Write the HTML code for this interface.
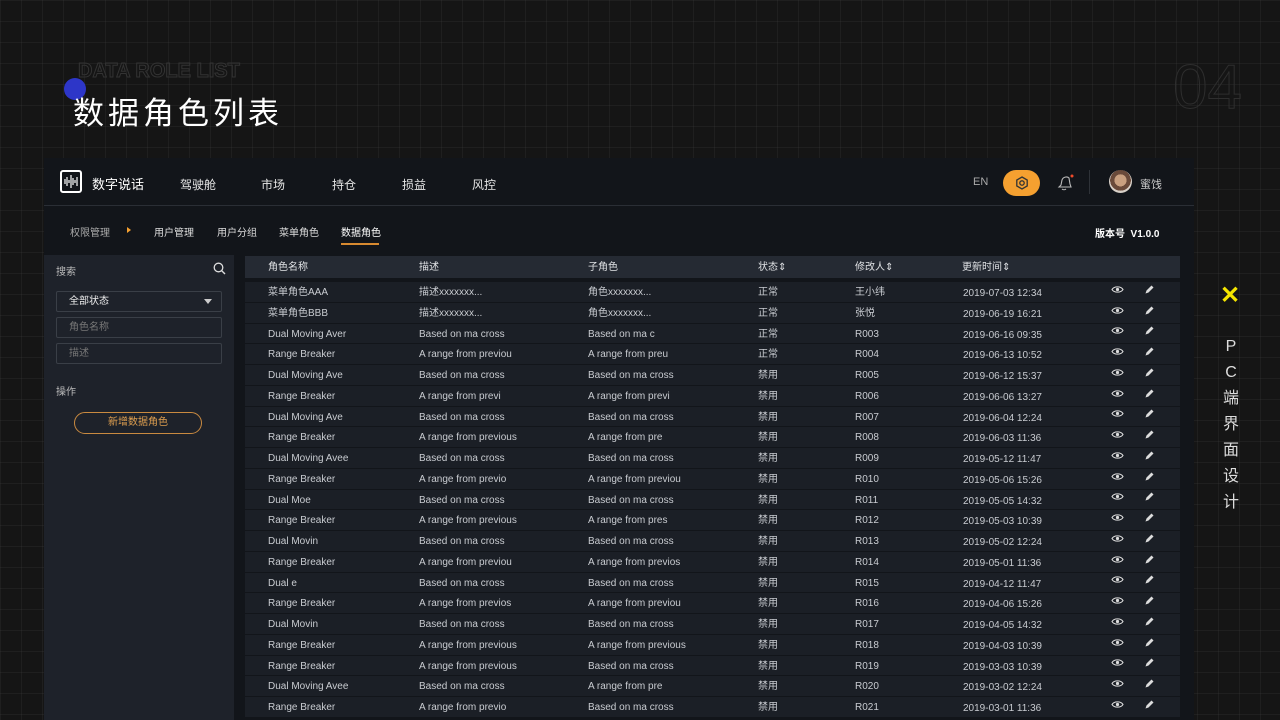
<!DOCTYPE html>
<html><head><meta charset="utf-8"><style>
*{margin:0;padding:0;box-sizing:border-box}
body{width:1280px;height:720px;overflow:hidden;position:relative;font-family:"Liberation Sans","Noto Sans CJK SC",sans-serif;
background:#151515;
background-image:linear-gradient(rgba(70,70,70,.2) 1px,transparent 1px),linear-gradient(90deg,rgba(70,70,70,.2) 1px,transparent 1px);
background-size:21px 21px;}
.abs{position:absolute}
.t{white-space:nowrap}
.row{position:absolute;left:245px;width:935px;height:19.75px;background:#1b1f26;font-size:10px;color:#c9ccd1;line-height:20px}
.row span{position:absolute;top:1px;white-space:nowrap;line-height:20px;height:20px}
.row span svg{vertical-align:middle}
.hd span{position:absolute;top:0;line-height:24px;font-size:10px;color:#e0e2e5;white-space:nowrap}
</style></head><body>
<div class="abs t" style="left:78px;top:60px;font-size:20px;font-weight:bold;color:transparent;-webkit-text-stroke:1px #333">DATA ROLE LIST</div>
<div class="abs" style="left:64px;top:78px;width:22px;height:22px;border-radius:50%;background:#2d36c8"></div>
<div class="abs t" style="left:73px;top:88px;font-size:31px;color:#fff;letter-spacing:4px">数据角色列表</div>
<div class="abs t" style="left:1173px;top:52px;font-size:62px;font-weight:300;color:transparent;-webkit-text-stroke:1px #2e2e2e">04</div>
<div class="abs" style="left:1220px;top:284px;font-size:24px;color:#f5e600;font-weight:bold;line-height:24px">✕</div>
<div class="abs" style="left:1222px;top:334px;width:18px;font-size:16px;color:#ddd;line-height:26px;text-align:center">P<br>C<br>端<br>界<br>面<br>设<br>计</div>

<div class="abs" style="left:44px;top:158px;width:1150px;height:562px;background:#12151a"></div>
<div class="abs" style="left:44px;top:205px;width:1150px;height:1px;background:#2a2e35"></div>
<div class="abs" style="left:60px;top:170px;width:22px;height:23px;border:2px solid #fff;border-radius:3px"><svg width="18" height="19" viewBox="0 0 18 19"><g stroke="#fff" stroke-width="1.2"><path d="M3 7v5M5 5v9M7 8v3M9 3v13M11 6v7M13 8v3M15 5v9"/></g></svg></div>
<div class="abs t" style="left:92px;top:174px;font-size:13px;color:#fff">数字说话</div>
<div class="abs t" style="left:180px;top:176px;font-size:12px;color:#e6e6e6">驾驶舱</div>
<div class="abs t" style="left:261px;top:176px;font-size:12px;color:#e6e6e6">市场</div>
<div class="abs t" style="left:332px;top:176px;font-size:12px;color:#e6e6e6">持仓</div>
<div class="abs t" style="left:402px;top:176px;font-size:12px;color:#e6e6e6">损益</div>
<div class="abs t" style="left:472px;top:176px;font-size:12px;color:#e6e6e6">风控</div>
<div class="abs t" style="left:973px;top:176px;font-size:11px;color:#aaa">EN</div>
<div class="abs" style="left:1003px;top:170px;width:37px;height:26px;border-radius:13px;background:#f5a030"><svg class="abs" style="left:11px;top:5px" width="16" height="16" viewBox="0 0 16 16"><path d="M8 2l5.2 3v6L8 14l-5.2-3V5z" fill="none" stroke="#333" stroke-width="1.3"/><circle cx="8" cy="8" r="2.2" fill="none" stroke="#333" stroke-width="1.3"/></svg></div>
<svg class="abs" style="left:1054px;top:173px" width="22" height="20" viewBox="0 0 22 20"><path d="M5 14l2-2 1-5c1-3 5-4 7-2l1 6 1 3z M8 16c1 1 3 1 4 0" fill="none" stroke="#bbb" stroke-width="1.1"/><circle cx="18" cy="3" r="1.5" fill="#f04a2a"/></svg>
<div class="abs" style="left:1089px;top:170px;width:1px;height:24px;background:#2e3238"></div>
<div class="abs" style="left:1109px;top:170px;width:23px;height:23px;border-radius:50%;background:radial-gradient(circle at 50% 45%,#c9a080 0 35%,#6a4a3a 36% 60%,#d8d0c8 61%)"></div>
<div class="abs t" style="left:1140px;top:176px;font-size:11px;color:#ccc">蜜饯</div>

<div class="abs t" style="left:70px;top:224px;font-size:10px;color:#aaa">权限管理</div>
<div class="abs" style="left:127px;top:227px;width:0;height:0;border-left:4px solid #f5a030;border-top:3px solid transparent;border-bottom:3px solid transparent"></div>
<div class="abs t" style="left:154px;top:224px;font-size:10px;color:#ddd">用户管理</div>
<div class="abs t" style="left:217px;top:224px;font-size:10px;color:#ddd">用户分组</div>
<div class="abs t" style="left:279px;top:224px;font-size:10px;color:#ddd">菜单角色</div>
<div class="abs t" style="left:341px;top:224px;font-size:10px;color:#fff">数据角色</div>
<div class="abs" style="left:341px;top:243px;width:38px;height:2px;background:#d88a30"></div>
<div class="abs t" style="left:1095px;top:225px;font-size:10px;color:#fff;font-weight:bold">版本号&nbsp; V1.0.0</div>

<div class="abs" style="left:44px;top:255px;width:190px;height:465px;background:#1e222a"></div>
<div class="abs t" style="left:56px;top:263px;font-size:10px;color:#bbb">搜索</div>
<svg class="abs" style="left:213px;top:262px" width="13" height="13" viewBox="0 0 13 13"><circle cx="5.5" cy="5.5" r="4.3" fill="none" stroke="#ddd" stroke-width="1.3"/><path d="M8.6 8.6L12 12" stroke="#ddd" stroke-width="1.4"/></svg>
<div class="abs" style="left:56px;top:291px;width:166px;height:21px;border:1px solid #3a3f47;border-radius:2px"></div>
<div class="abs t" style="left:69px;top:291px;font-size:10px;color:#eee;line-height:21px">全部状态</div>
<div class="abs" style="left:204px;top:299px;border-top:5px solid #ccc;border-left:4px solid transparent;border-right:4px solid transparent"></div>
<div class="abs" style="left:56px;top:317px;width:166px;height:21px;border:1px solid #3a3f47;border-radius:2px"></div>
<div class="abs t" style="left:69px;top:317px;font-size:10px;color:#777;line-height:21px">角色名称</div>
<div class="abs" style="left:56px;top:343px;width:166px;height:21px;border:1px solid #3a3f47;border-radius:2px"></div>
<div class="abs t" style="left:69px;top:343px;font-size:10px;color:#777;line-height:21px">描述</div>
<div class="abs t" style="left:56px;top:383px;font-size:10px;color:#bbb">操作</div>
<div class="abs" style="left:74px;top:412px;width:128px;height:22px;border:1.5px solid #c98a40;border-radius:11px;text-align:center;font-size:10px;color:#e0a050;line-height:19px">新增数据角色</div>

<div class="abs hd" style="left:245px;top:256px;width:935px;height:22px;background:#252a33">
<span style="left:23px">角色名称</span><span style="left:174px">描述</span><span style="left:343px">子角色</span><span style="left:513px">状态⇕</span><span style="left:610px">修改人⇕</span><span style="left:717px">更新时间⇕</span></div>
<div id="rows"></div>
<script>
var d=[["菜单角色AAA","描述xxxxxxx...","角色xxxxxxx...","正常","王小纬","2019-07-03 12:34"],
["菜单角色BBB","描述xxxxxxx...","角色xxxxxxx...","正常","张悦","2019-06-19 16:21"],
["Dual Moving Aver","Based on ma cross","Based on ma c","正常","R003","2019-06-16 09:35"],
["Range Breaker","A range from previou","A range from preu","正常","R004","2019-06-13 10:52"],
["Dual Moving Ave","Based on ma cross","Based on ma cross","禁用","R005","2019-06-12 15:37"],
["Range Breaker","A range from previ","A range from previ","禁用","R006","2019-06-06 13:27"],
["Dual Moving Ave","Based on ma cross","Based on ma cross","禁用","R007","2019-06-04 12:24"],
["Range Breaker","A range from previous","A range from pre","禁用","R008","2019-06-03 11:36"],
["Dual Moving Avee","Based on ma cross","Based on ma cross","禁用","R009","2019-05-12 11:47"],
["Range Breaker","A range from previo","A range from previou","禁用","R010","2019-05-06 15:26"],
["Dual Moe","Based on ma cross","Based on ma cross","禁用","R011","2019-05-05 14:32"],
["Range Breaker","A range from previous","A range from pres","禁用","R012","2019-05-03 10:39"],
["Dual Movin","Based on ma cross","Based on ma cross","禁用","R013","2019-05-02 12:24"],
["Range Breaker","A range from previou","A range from previos","禁用","R014","2019-05-01 11:36"],
["Dual e","Based on ma cross","Based on ma cross","禁用","R015","2019-04-12 11:47"],
["Range Breaker","A range from previos","A range from previou","禁用","R016","2019-04-06 15:26"],
["Dual Movin","Based on ma cross","Based on ma cross","禁用","R017","2019-04-05 14:32"],
["Range Breaker","A range from previous","A range from previous","禁用","R018","2019-04-03 10:39"],
["Range Breaker","A range from previous","Based on ma cross","禁用","R019","2019-03-03 10:39"],
["Dual Moving Avee","Based on ma cross","A range from pre","禁用","R020","2019-03-02 12:24"],
["Range Breaker","A range from previo","Based on ma cross","禁用","R021","2019-03-01 11:36"]];
var xs=[23,174,343,513,610,718],h="";
var eye='<svg width="13" height="9" viewBox="0 0 13 9"><path d="M1 4.5C3 1 10 1 12 4.5 10 8 3 8 1 4.5z" fill="none" stroke="#ddd" stroke-width="1.1"/><circle cx="6.5" cy="4.5" r="1.6" fill="#ddd"/></svg>';
var pen='<svg width="10" height="11" viewBox="0 0 10 11"><path d="M1.5 9.5l1-3 5-5 2 2-5 5z" fill="#ddd"/></svg>';
d.forEach(function(r,i){var top=282+i*20.75;h+='<div class="row" style="top:'+top+'px">';
r.forEach(function(c,j){h+='<span style="left:'+xs[j]+'px'+(j==5?';top:2px':'')+'">'+c+'</span>'});
h+='<span style="left:866px;top:-2px">'+eye+'</span><span style="left:899px;top:-2px">'+pen+'</span></div>'});
document.getElementById('rows').innerHTML=h;
</script>
</body></html>
